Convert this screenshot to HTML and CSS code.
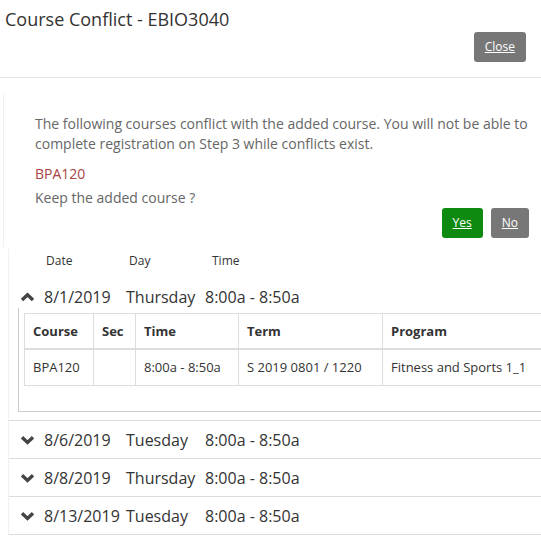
FILE: index.html
```html
<!DOCTYPE html>
<html>
<head>
<meta charset="utf-8">
<title>Course Conflict</title>
<link rel="stylesheet" href="styles.css">
</head>
<body>
<div class="modal-header">
  <h4 class="modal-title">Course Conflict - EBIO3040</h4>
  <div class="header-actions"><a class="btn btn-grey" href="#">Close</a></div>
</div>
<div class="modal-body">
  <div class="message">
    <p class="msg-text">The following courses conflict with the added course. You will not be able to complete registration on Step 3 while conflicts exist.</p>
    <div class="conflict-code">BPA120</div>
    <div class="msg-text question">Keep the added course ?</div>
    <div class="answer-actions">
      <a class="btn btn-green" href="#">Yes</a>
      <a class="btn btn-grey" href="#">No</a>
    </div>
  </div>
  <div class="schedule">
    <div class="schedule-head"><span class="col-date">Date</span><span class="col-day">Day</span><span>Time</span></div>

    <div class="group open">
      <div class="group-row">
        <svg class="chev" width="15" height="10" viewBox="0 0 15 10"><polyline points="2,8 7.5,2.8 13,8" fill="none" stroke="#444" stroke-width="3.4" stroke-linejoin="miter"/></svg>
        <span class="g-date">8/1/2019</span><span class="g-day">Thursday</span><span class="g-time">8:00a - 8:50a</span>
      </div>
      <div class="panel">
        <table class="conflicts">
          <colgroup><col class="c1"><col class="c2"><col class="c3"><col class="c4"><col class="c5"></colgroup>
          <thead>
            <tr><th>Course</th><th>Sec</th><th>Time</th><th>Term</th><th>Program</th></tr>
          </thead>
          <tbody>
            <tr><td>BPA120</td><td></td><td>8:00a - 8:50a</td><td>S 2019 0801 / 1220</td><td>Fitness and Sports 1_1</td></tr>
          </tbody>
        </table>
      </div>
    </div>

    <div class="group">
      <div class="group-row">
        <svg class="chev" width="15" height="10" viewBox="0 0 15 10"><polyline points="2,2.2 7.5,7.4 13,2.2" fill="none" stroke="#444" stroke-width="3.4" stroke-linejoin="miter"/></svg>
        <span class="g-date">8/6/2019</span><span class="g-day">Tuesday</span><span class="g-time">8:00a - 8:50a</span>
      </div>
    </div>

    <div class="group">
      <div class="group-row">
        <svg class="chev" width="15" height="10" viewBox="0 0 15 10"><polyline points="2,2.2 7.5,7.4 13,2.2" fill="none" stroke="#444" stroke-width="3.4" stroke-linejoin="miter"/></svg>
        <span class="g-date">8/8/2019</span><span class="g-day">Thursday</span><span class="g-time">8:00a - 8:50a</span>
      </div>
    </div>

    <div class="group">
      <div class="group-row">
        <svg class="chev" width="15" height="10" viewBox="0 0 15 10"><polyline points="2,2.2 7.5,7.4 13,2.2" fill="none" stroke="#444" stroke-width="3.4" stroke-linejoin="miter"/></svg>
        <span class="g-date">8/13/2019</span><span class="g-day">Tuesday</span><span class="g-time">8:00a - 8:50a</span>
      </div>
    </div>
  </div>
</div>
</body>
</html>
```
FILE: styles.css
```css
html, body {
  margin: 0;
  padding: 0;
  overflow: hidden;
  background: #fff;
}
body {
  font-family: "Open Sans", "Liberation Sans", sans-serif;
  color: #333;
  width: 541px;
}
.modal-header {
  padding: 7px 15px 15px 5px;
  border-bottom: 1px solid #e5e5e5;
}
.modal-title {
  margin: 0;
  font-size: 18px;
  font-weight: 400;
  line-height: 24.5px;
  color: #333;
}
.header-actions {
  display: flex;
  justify-content: flex-end;
}
.btn {
  display: inline-block;
  height: 30px;
  line-height: 30px;
  padding: 0 11px;
  font-size: 12px;
  color: #fff;
  text-decoration: underline;
  border-radius: 3px;
  box-sizing: border-box;
}
.btn-grey { background: #777; }
.btn-green { background: #0f8a10; }

.modal-body {
  padding: 0;
}
.message {
  margin: 16px 0 0 3px;
  border-left: 1px solid #f1f1f1;
  padding: 20px 8px 9px 31px;
}
.msg-text {
  margin: 0;
  font-size: 14px;
  line-height: 20px;
  color: #666;
}
p.msg-text { margin-bottom: 10px; }
.conflict-code {
  font-size: 14px;
  line-height: 20px;
  color: #a94442;
  margin-bottom: 4px;
}
.answer-actions {
  display: flex;
  justify-content: flex-end;
  gap: 8px;
  margin-right: 4px;
}
.schedule {
  margin: 2px 0 0 8px;
  border-left: 1px solid #f1f1f1;
  padding-top: 3px;
}
.schedule-head {
  font-size: 12px;
  line-height: 17px;
  color: #333;
  padding-left: 37px;
  margin-bottom: 9px;
}
.schedule-head span { display: inline-block; }
.col-date, .col-day { width: 83px; }

.group {
  border-bottom: 1px solid #ddd;
}
.group-row {
  display: flex;
  align-items: center;
  padding: 8px 0 7px 11px;
  font-size: 16px;
  line-height: 22px;
  color: #333;
}
.group.open .group-row { padding-bottom: 0; }
.chev {
  display: block;
  width: 15px;
  height: 10px;
  margin-right: 9px;
}
.g-date { width: 82px; flex: none; }
.g-day { width: 79px; flex: none; }
.g-time { white-space: nowrap; }

.panel {
  margin: 0 0 8px 9px;
  border: 1px solid #ccc;
  border-top: 0;
  border-right: 0;
  padding: 5px 0 5px 5px;
}
.conflicts {
  border-collapse: collapse;
  table-layout: fixed;
  width: 540px;
  margin-bottom: 20px;
  font-size: 13px;
  line-height: 18.57px;
  color: #333;
}
.conflicts th, .conflicts td {
  border: 1px solid #ddd;
  padding: 8px;
  text-align: left;
  white-space: nowrap;
}
.conflicts th {
  font-weight: 700;
  border-bottom-width: 2px;
}
.c1 { width: 69px; }
.c2 { width: 42px; }
.c3 { width: 103px; }
.c4 { width: 144px; }
.c5 { width: 182px; }
```
